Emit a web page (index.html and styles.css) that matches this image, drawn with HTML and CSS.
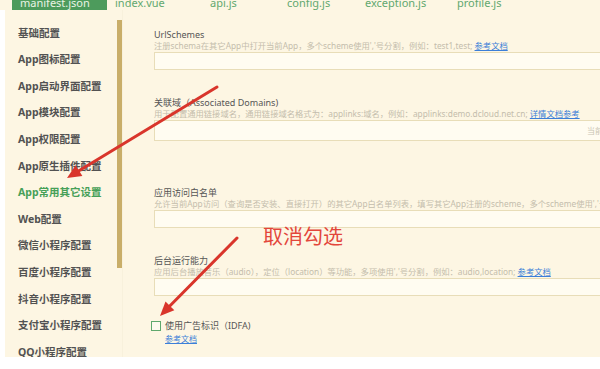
FILE: index.html
```html
<!DOCTYPE html>
<html lang="zh-CN">
<head>
<meta charset="utf-8">
<title>manifest.json</title>
<link rel="stylesheet" href="styles.css">
</head>
<body>
  <div class="tabs">
    <div class="tab active">manifest.json</div>
    <div class="tab">index.vue</div>
    <div class="tab">api.js</div>
    <div class="tab">config.js</div>
    <div class="tab">exception.js</div>
    <div class="tab">profile.js</div>
  </div>
  <div class="main">
    <aside class="side">
      <ul class="menu">
        <li>基础配置</li>
        <li>App图标配置</li>
        <li>App启动界面配置</li>
        <li>App模块配置</li>
        <li>App权限配置</li>
        <li>App原生插件配置</li>
        <li class="current">App常用其它设置</li>
        <li>Web配置</li>
        <li>微信小程序配置</li>
        <li>百度小程序配置</li>
        <li>抖音小程序配置</li>
        <li>支付宝小程序配置</li>
        <li>QQ小程序配置</li>
      </ul>
      <div class="track"><div class="thumb"></div></div>
    </aside>
    <section class="content">
      <div class="field">
        <div class="label">UrlSchemes</div>
        <div class="desc">注册schema在其它App中打开当前App，多个scheme使用','号分割，例如：test1,test; <a class="link">参考文档</a></div>
        <div class="input"></div>
      </div>
      <div class="field wide">
        <div class="label">关联域（Associated Domains)</div>
        <div class="desc">用于配置通用链接域名，通用链接域名格式为：applinks:域名，例如：applinks:demo.dcloud.net.cn; <a class="link">详情文档参考</a></div>
        <div class="input tall"><span class="hint">当前未设置</span></div>
      </div>
      <div class="field">
        <div class="label">应用访问白名单</div>
        <div class="desc">允许当前App访问（查询是否安装、直接打开）的其它App白名单列表，填写其它App注册的scheme，多个scheme使用','号分割，例如：taobao,weixin</div>
        <div class="input"></div>
      </div>
      <div class="field">
        <div class="label">后台运行能力</div>
        <div class="desc">应用后台播放音乐（audio），定位（location）等功能，多项使用','号分割，例如：audio,location; <a class="link">参考文档</a></div>
        <div class="input"></div>
      </div>
      <label class="check">
        <span class="box"></span>
        <span class="check-text">使用广告标识（IDFA)</span>
      </label>
      <a class="link small">参考文档</a>
    </section>
  </div>
  <svg class="arrows" width="600" height="369" viewBox="0 0 600 369">
    <line x1="217" y1="87" x2="79" y2="170.7" stroke="#d9352b" stroke-width="3" stroke-linecap="round"/>
    <polygon points="67,178 82.4,176 75.6,165.3" fill="#d9352b"/>
    <line x1="237" y1="238" x2="169.8" y2="306" stroke="#d9352b" stroke-width="3" stroke-linecap="round"/>
    <polygon points="160,316 174.3,310.3 165.5,301.6" fill="#d9352b"/>
  </svg>
  <div class="note">取消勾选</div>
</body>
</html>
```
FILE: styles.css
```css
* {
  box-sizing: border-box;
  margin: 0;
  padding: 0;
}

body {
  position: relative;
  width: 600px;
  height: 369px;
  overflow: hidden;
  background: #ffffff;
  font-family: "Noto Sans", "Noto Sans CJK SC", sans-serif;
  color: #555555;
}

.tabs {
  display: grid;
  grid-template-columns: 95px 95px 77px 78px 92px 80px;
  height: 10px;
  padding-left: 12px;
  background: #fdf6e3;
  overflow: visible;
}

.tab {
  height: 10px;
  line-height: 5px;
  padding-left: 8px;
  font-size: 11px;
  color: #62a86f;
  white-space: nowrap;
}

.tab.active {
  background: #4d9b5c;
  color: #e9f3e4;
}

.main {
  display: flex;
  height: 347px;
  margin-left: 5px;
  background: #fdf6e3;
  overflow: hidden;
}

.side {
  display: flex;
  flex: none;
  width: 118px;
  border-right: 1px solid #f8f1dc;
}

.menu {
  list-style: none;
  width: 112px;
  padding: 9.7px 0 0 13px;
}

.menu li {
  height: 26.6px;
  line-height: 26.6px;
  font-size: 10.5px;
  font-weight: bold;
  color: #525252;
  white-space: nowrap;
}

.menu li.current {
  color: #46a058;
}

.track {
  width: 5px;
}

.thumb {
  margin-top: 10px;
  height: 248px;
  background: #c9ae69;
}

.content {
  flex: 1;
  min-width: 0;
  padding: 19px 0 0 31px;
  white-space: nowrap;
  overflow: hidden;
}

.field {
  margin-bottom: 27px;
}

.field.wide {
  margin-bottom: 46px;
}

.label {
  height: 12px;
  line-height: 12px;
  font-size: 9px;
  color: #555555;
}

.desc {
  height: 10px;
  line-height: 10px;
  font-size: 8.3px;
  color: #c4bdac;
}

.link {
  color: #3c7fd8;
  text-decoration: underline;
}

.input {
  display: flex;
  justify-content: flex-end;
  align-items: center;
  width: 480px;
  height: 18px;
  margin-top: 1px;
  padding-right: 6px;
  border: 1px solid #e8ddb8;
  background: #fffcf1;
}

.input.tall {
  height: 21px;
}

.hint {
  font-size: 8px;
  color: #c9c3b3;
}

.check {
  display: flex;
  align-items: center;
  gap: 4px;
  height: 12px;
  margin: -3px 0 0 -3px;
}

.box {
  width: 10px;
  height: 10px;
  border: 1px solid #5fa86d;
  background: #fdfaee;
}

.check-text {
  font-size: 9px;
  line-height: 12px;
  color: #555555;
}

.link.small {
  display: block;
  margin: 2px 0 0 11px;
  font-size: 8px;
  line-height: 10px;
}

.arrows {
  position: absolute;
  left: 0;
  top: 0;
}

.note {
  position: absolute;
  left: 263px;
  top: 224px;
  font-family: "Noto Sans CJK SC", sans-serif;
  font-size: 20px;
  line-height: 24px;
  color: #e3463b;
}
```
